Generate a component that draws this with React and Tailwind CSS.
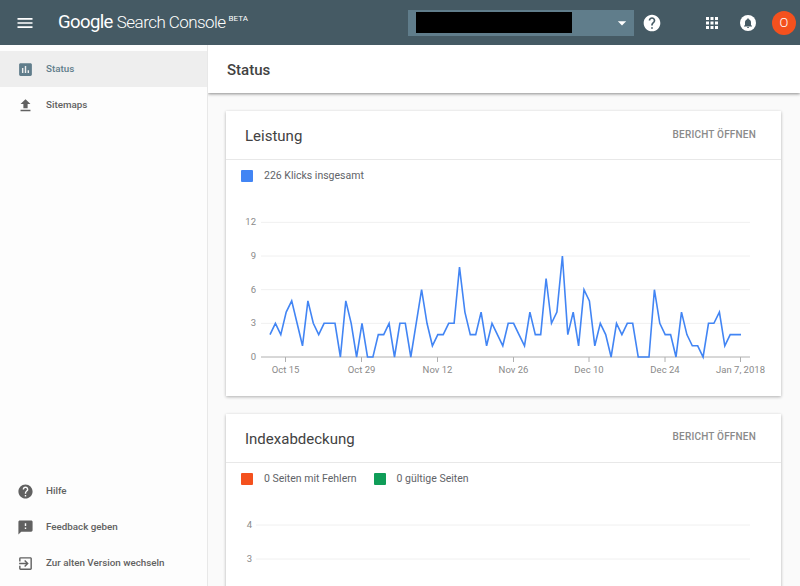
import {
  MdApps,
  MdArrowDropDown,
  MdAssessment,
  MdExitToApp,
  MdFeedback,
  MdFileUpload,
  MdHelp,
  MdMenu,
  MdNotifications,
} from "react-icons/md";

const clicks = [
  2, 3, 2, 4, 5, 3, 1, 5, 3, 2, 3, 3, 3, 0, 5, 3, 0, 3, 0, 0, 2, 2, 3, 0, 3, 3, 0, 3, 6, 3,
  1, 2, 2, 3, 3, 8, 4, 2, 2, 4, 1, 3, 2, 1, 3, 3, 2, 1, 4, 2, 2, 7, 3, 4, 9, 2, 4, 1, 6, 5,
  1, 3, 2, 0, 3, 2, 3, 3, 0, 0, 0, 6, 3, 2, 2, 0, 4, 2, 1, 1, 0, 3, 3, 4, 1, 2, 2, 2,
];

const ticks = [
  { label: "Oct 15", x: 59.5 },
  { label: "Oct 29", x: 135.5 },
  { label: "Nov 12", x: 211.5 },
  { label: "Nov 26", x: 287.5 },
  { label: "Dec 10", x: 363 },
  { label: "Dec 24", x: 439 },
  { label: "Jan 7, 2018", x: 514.5 },
];

const Header = () => (
  <header className="flex h-[45px] shrink-0 items-center bg-[#455a64] text-white">
    <MdMenu className="ml-[15px] text-[20px]" />
    <div className="ml-[23px] flex w-[190px] items-baseline whitespace-nowrap font-['Roboto',sans-serif] font-light">
      <span className="text-[18.5px] font-normal tracking-[-0.6px]">Google</span>
      <span className="ml-[4px] text-[17px] tracking-[-0.55px]">Search Console</span>
      <span className="relative -top-[7px] ml-[3px] text-[8px] font-normal">BETA</span>
    </div>
    <div className="ml-[160px] flex h-[26px] w-[226px] items-center bg-[#607d8b] pl-2">
      <div className="h-[21px] w-[156px] bg-black" />
      <MdArrowDropDown className="ml-auto mr-[2px] text-[20px]" />
    </div>
    <MdHelp className="ml-[8px] text-[20px]" />
    <MdApps className="ml-[41px] text-[18px]" />
    <div className="ml-[19px] flex h-4 w-4 items-center justify-center rounded-full bg-white">
      <MdNotifications className="text-[12px] text-[#455a64]" />
    </div>
    <div className="ml-[16px] flex h-6 w-6 items-center justify-center rounded-full bg-[#f4511e] font-['Roboto',sans-serif] text-[13px] font-light">
      O
    </div>
  </header>
);

const NavItem = ({ icon: Icon, label, active }) => (
  <div
    className={`flex h-9 items-center pl-[17px] text-[9.8px] font-medium ${
      active ? "bg-[#eeeeee] text-[#607d8b]" : "text-[#616161]"
    }`}
  >
    <Icon className={`text-[17px] ${active ? "text-[#607d8b]" : "text-[#616161]"}`} />
    <span className="ml-[12px] mt-px">{label}</span>
  </div>
);

const Sidebar = () => (
  <aside className="flex w-[208px] shrink-0 flex-col border-r border-[#e8e8e8] bg-[#fdfdfd] pb-[5px] pt-[6px]">
    <NavItem icon={MdAssessment} label="Status" active />
    <NavItem icon={MdFileUpload} label="Sitemaps" />
    <div className="mt-auto">
      <NavItem icon={MdHelp} label="Hilfe" />
      <NavItem icon={MdFeedback} label="Feedback geben" />
      <NavItem icon={MdExitToApp} label="Zur alten Version wechseln" />
    </div>
  </aside>
);

const Legend = ({ color, label }) => (
  <div className="flex items-center">
    <span className={`h-3 w-3 rounded-[1px] ${color}`} />
    <span className="ml-[11px] text-[10.5px] text-[#5f6368]">{label}</span>
  </div>
);

const Card = ({ title, children }) => (
  <section className="mb-[18px] bg-white shadow-[0_1px_3px_rgba(0,0,0,0.3)]">
    <div className="flex h-[49px] items-center justify-between border-b border-[#e8e8e8] pl-[19px] pr-[25px]">
      <h2 className="mt-[2px] text-[15px] text-[#424242]">{title}</h2>
      <span className="-mt-[2px] text-[10px] font-medium tracking-[0.2px] text-[#8a8a8a]">BERICHT ÖFFNEN</span>
    </div>
    {children}
  </section>
);

const ClicksChart = () => {
  // x: 5.414px per day, y: 11.22px per click
  const points = clicks
    .map((v, i) => `${(44 + i * 5.414).toFixed(1)},${(146 - v * 11.22).toFixed(1)}`)
    .join(" ");
  return (
    <svg width="553" height="175" className="mt-[27px] block">
      {[12, 9, 6, 3].map((v) => (
        <g key={v}>
          <line x1="35" x2="524" y1={146 - v * 11.22} y2={146 - v * 11.22} stroke="#f0f0f0" />
          <text x="30" y={146 - v * 11.22 + 3} textAnchor="end" fontSize="9.5" fill="#8a8a8a">
            {v}
          </text>
        </g>
      ))}
      <line x1="35" x2="524" y1="146" y2="146" stroke="#b0b0b0" />
      <text x="30" y="149" textAnchor="end" fontSize="9.5" fill="#8a8a8a">
        0
      </text>
      {ticks.map((t) => (
        <g key={t.label}>
          <line x1={t.x} x2={t.x} y1="146" y2="151" stroke="#b0b0b0" />
          <text x={t.x} y="162" textAnchor="middle" fontSize="9.5" fill="#8a8a8a">
            {t.label}
          </text>
        </g>
      ))}
      <polyline points={points} fill="none" stroke="#4285f4" strokeWidth="1.6" />
    </svg>
  );
};

const CoverageChart = () => (
  <svg width="553" height="120" className="mt-[5px] block">
    {[
      { v: 4, y: 33 },
      { v: 3, y: 67 },
    ].map((g) => (
      <g key={g.v}>
        <line x1="30" x2="524" y1={g.y} y2={g.y} stroke="#f0f0f0" />
        <text x="26" y={g.y + 3} textAnchor="end" fontSize="9.5" fill="#8a8a8a">
          {g.v}
        </text>
      </g>
    ))}
  </svg>
);

const App = () => (
  <div className="flex h-[586px] w-[800px] flex-col overflow-hidden bg-[#fafafa] font-['Roboto',sans-serif]">
    <Header />
    <div className="flex min-h-0 flex-1">
      <Sidebar />
      <main className="min-w-0 flex-1 overflow-hidden">
        <div className="flex h-[48px] items-center bg-white pl-[19px] shadow-[0_1px_3px_rgba(0,0,0,0.45)]">
          <h1 className="mt-[2px] text-[15px] font-medium text-[#424242]">Status</h1>
        </div>
        <div className="pl-[18px] pr-[19px] pt-[18px]">
          <Card title="Leistung">
            <div className="flex gap-[16px] pl-[15px] pt-[8px]">
              <Legend color="bg-[#4285f4]" label="226 Klicks insgesamt" />
            </div>
            <ClicksChart />
            <div className="h-[10px]" />
          </Card>
          <Card title="Indexabdeckung">
            <div className="flex gap-[17px] pl-[15px] pt-[8px]">
              <Legend color="bg-[#f4511e]" label="0 Seiten mit Fehlern" />
              <Legend color="bg-[#0f9d58]" label="0 gültige Seiten" />
            </div>
            <CoverageChart />
          </Card>
        </div>
      </main>
    </div>
  </div>
);

export default App;
